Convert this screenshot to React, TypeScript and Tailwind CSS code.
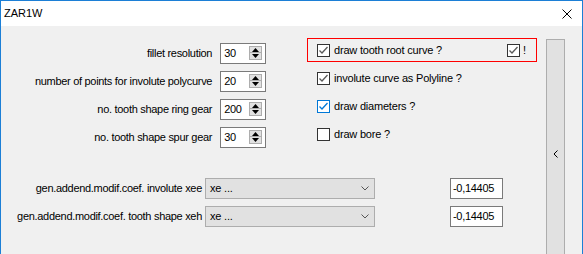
import React from "react";

const font = { fontFamily: '"Liberation Sans", Arial, sans-serif' };

function Check({ checked, blue }: { checked: boolean; blue?: boolean }) {
  const c = blue ? "#0078d7" : "#333333";
  const m = blue ? "#0078d7" : "#5a5a5a";
  return (
    <div className={`w-[13px] h-[13px] shrink-0 border bg-white ${blue ? "border-[#0078d7]" : "border-[#333333]"}`} style={{ borderColor: c }}>
      {checked && (
        <svg width="11" height="11" viewBox="0 0 11 11" className="block">
          <path d="M1.5 5.5 L4 8 L9.5 2" fill="none" stroke={m} strokeWidth="1.3" />
        </svg>
      )}
    </div>
  );
}

function Spin({ value }: { value: string }) {
  return (
    <div className="ml-[8px] w-[46px] h-[21px] border border-[#7a7a7a] bg-white flex items-center">
      <span className="pl-[3px] text-[11px] tracking-[-0.3px] text-black flex-1">{value}</span>
      <div className="flex flex-col mr-[3px] gap-0">
        <div className="w-[13px] h-[7px] bg-[#e1e1e1] border border-[#adadad] flex items-center justify-center">
          <svg width="7" height="4" viewBox="0 0 7 4" className="block"><path d="M0 4 L3.5 0 L7 4 Z" fill="#000" /></svg>
        </div>
        <div className="w-[13px] h-[7px] bg-[#e1e1e1] border border-[#adadad] border-t-0 flex items-center justify-center">
          <svg width="7" height="4" viewBox="0 0 7 4" className="block"><path d="M0 0 L3.5 4 L7 0 Z" fill="#000" /></svg>
        </div>
      </div>
    </div>
  );
}

function SpinRow({ label, value }: { label: string; value: string }) {
  return (
    <div className="h-[28px] flex items-center">
      <div className="w-[212px] text-right text-[11px] tracking-[-0.3px] text-black whitespace-nowrap">{label}</div>
      <Spin value={value} />
    </div>
  );
}

function CheckRow({ label, checked, blue }: { label: string; checked: boolean; blue?: boolean }) {
  return (
    <div className="h-[28px] flex items-center pl-[10px]">
      <Check checked={checked} blue={blue} />
      <span className="ml-[4px] text-[11px] tracking-[-0.2px] text-black whitespace-nowrap">{label}</span>
    </div>
  );
}

function ComboRow({ label }: { label: string }) {
  return (
    <div className="h-[21px] flex items-center">
      <div className="w-[201px] text-right text-[11px] tracking-[-0.3px] text-black whitespace-nowrap">{label}</div>
      <div className="ml-[3px] w-[170px] h-[21px] bg-[#e1e1e1] border border-[#adadad] flex items-center">
        <span className="pl-[4px] text-[11px] tracking-[-0.2px] flex-1">xe ...</span>
        <svg width="8" height="5" viewBox="0 0 8 5" className="mr-[5px] block">
          <path d="M0.5 0.5 L4 4 L7.5 0.5" fill="none" stroke="#555" strokeWidth="1" />
        </svg>
      </div>
      <div className="ml-[75px] w-[53px] h-[21px] bg-white border border-[#7a7a7a] flex items-center">
        <span className="pl-[2px] text-[11px] tracking-[-0.3px]">-0,14405</span>
      </div>
    </div>
  );
}

export default function App() {
  return (
    <div className="w-[583px] h-[254px] overflow-hidden border-l border-t border-r border-[#1c7fd6] bg-[#f0f0f0] flex flex-col" style={font}>
      <div className="h-[25px] bg-white flex items-center shrink-0">
        <span className="ml-[3px] text-[11px] text-black">ZAR1W</span>
        <div className="flex-1" />
        <svg width="10" height="10" viewBox="0 0 10 10" className="mr-[10px] block">
          <path d="M0.5 0.5 L9.5 9.5 M9.5 0.5 L0.5 9.5" stroke="#000" strokeWidth="1" />
        </svg>
      </div>
      <div className="flex flex-1">
        <div className="w-[545px] flex flex-col">
          <div className="flex items-start">
            <div className="w-[265px] pt-[13px] flex flex-col">
              <SpinRow label="fillet resolution" value="30" />
              <SpinRow label="number of points for involute polycurve" value="20" />
              <SpinRow label="no. tooth shape ring gear" value="200" />
              <SpinRow label="no. tooth shape spur gear" value="30" />
            </div>
            <div className="ml-[41px] pt-[10px] flex flex-col w-[230px]">
              <div className="h-[28px] flex items-center">
                <div className="w-[230px] h-[24px] border border-[#ff0000] flex items-center pl-[9px] pr-[10px]">
                  <Check checked />
                  <span className="ml-[4px] text-[11px] tracking-[-0.2px] text-black whitespace-nowrap flex-1">draw tooth root curve ?</span>
                  <Check checked />
                  <span className="ml-[3px] text-[11px] text-black">!</span>
                </div>
              </div>
              <CheckRow label="involute curve as Polyline ?" checked />
              <CheckRow label="draw diameters ?" checked blue />
              <CheckRow label="draw bore ?" checked={false} />
            </div>
          </div>
          <div className="mt-[27px] flex flex-col gap-[7px]">
            <ComboRow label="gen.addend.modif.coef. involute xee" />
            <ComboRow label="gen.addend.modif.coef. tooth shape xeh" />
          </div>
        </div>
        <div className="mt-[13px] w-[19px] bg-[#e1e1e1] border-l border-r border-t border-[#adadad] flex flex-col items-center pt-[110px]">
          <svg width="5" height="8" viewBox="0 0 5 8" className="block">
            <path d="M4.5 0.5 L1 4 L4.5 7.5" fill="none" stroke="#000" strokeWidth="1" />
          </svg>
        </div>
        <div className="w-[17px]" />
      </div>
    </div>
  );
}
